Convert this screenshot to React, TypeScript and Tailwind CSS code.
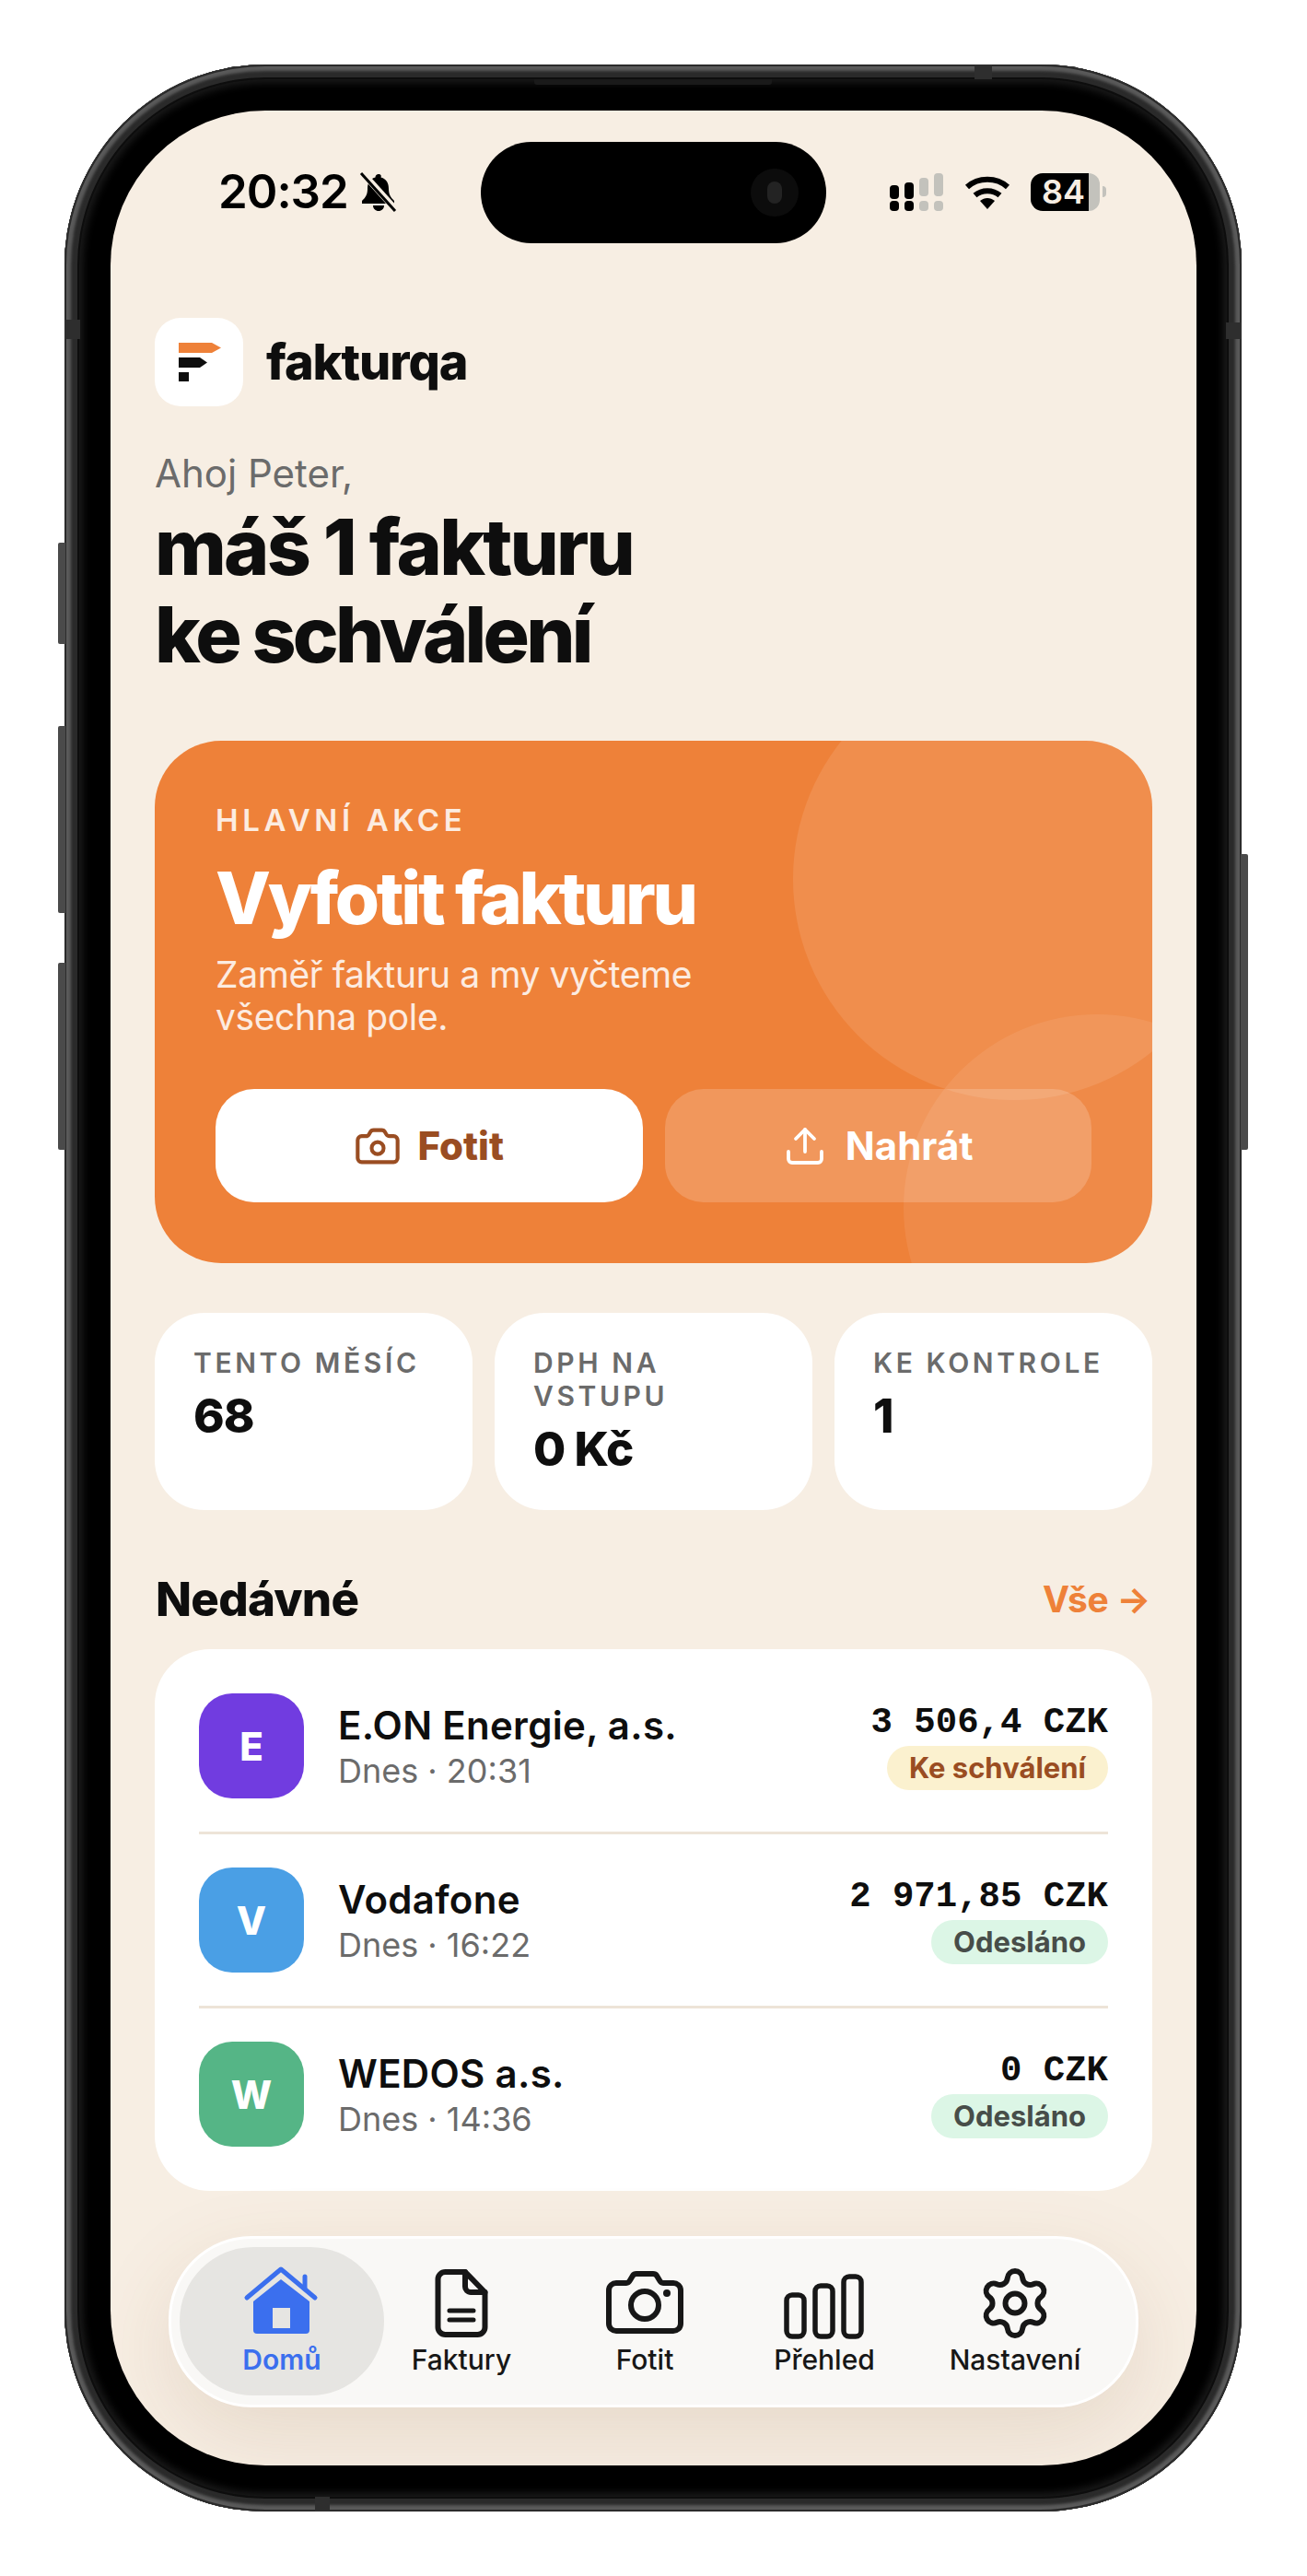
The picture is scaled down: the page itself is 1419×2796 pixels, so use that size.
import { Camera, Settings, Upload } from "lucide-react";

const BellOffIcon = () => (
  <svg width="42" height="44" viewBox="0 0 42 44" className="ml-[12px]">
    <path d="M21 3c-2 0-3.500 1.500-3.500 3.500C11 8.500 9 13 9 19c0 6-2 9-6 13v3h35v-3c-4-4-6-7-6-13 0-6-2-10.500-8.500-12.500C24.500 4.500 23 3 21 3z" fill="#000" />
    <path d="M15 37h12c0 3.500-2.700 6-6 6s-6-2.500-6-6z" fill="#000" />
    <path d="M3 1l37 41" stroke="#F7EEE3" strokeWidth="7" />
    <path d="M2 2l37 41" stroke="#000" strokeWidth="3" />
  </svg>
);

const SignalIcon = () => (
  <svg width="58" height="41" viewBox="0 0 58 41">
    <rect x="0" y="13" width="10" height="15" rx="4" fill="#000" />
    <rect x="16" y="10" width="10" height="18" rx="4" fill="#000" />
    <rect x="32" y="5" width="10" height="20" rx="4" fill="#C3C2BC" />
    <rect x="48" y="0" width="10" height="25" rx="4" fill="#C3C2BC" />
    <rect x="0" y="30" width="10" height="11" rx="4" fill="#000" />
    <rect x="16" y="30" width="10" height="11" rx="4" fill="#000" />
    <rect x="32" y="30" width="10" height="11" rx="4" fill="#C3C2BC" />
    <rect x="48" y="30" width="10" height="11" rx="4" fill="#C3C2BC" />
  </svg>
);

const WifiIcon = () => (
  <svg width="50" height="37" viewBox="0 0 50 37" fill="none">
    <path d="M3 13C15 2 35 2 47 13" stroke="#000" strokeWidth="6" />
    <path d="M11.500 22C19 15.500 31 15.500 38.500 22" stroke="#000" strokeWidth="6" />
    <path d="M17 28c5-4 11-4 16 0l-8 9z" fill="#000" />
  </svg>
);

const HouseIcon = () => (
  <svg width="84" height="84" viewBox="0 0 84 84" fill="none">
    <path d="M4 36L41 5l37 31" stroke="#3B6FEE" strokeWidth="5" strokeLinecap="round" strokeLinejoin="round" />
    <path d="M67 13v13" stroke="#3B6FEE" strokeWidth="5" strokeLinecap="round" />
    <path d="M41 16L72 40v31a4 4 0 0 1-4 4H15a4 4 0 0 1-4-4V40z" fill="#3B6FEE" />
    <rect x="32" y="47" width="19" height="22" fill="#E6E5E2" />
  </svg>
);

const DocIcon = () => (
  <svg width="84" height="84" viewBox="0 0 84 84" fill="none" stroke="#171717" strokeWidth="6" strokeLinejoin="round" strokeLinecap="round">
    <path d="M24.500 8H46L67.500 30v38a8 8 0 0 1-8 8h-35a8 8 0 0 1-8-8V16a8 8 0 0 1 8-8z" />
    <path d="M46 8v16a6 6 0 0 0 6 6h15.500" />
    <path d="M29 50h26M29 60h26" strokeWidth="5" />
  </svg>
);

const CameraIcon = () => (
  <svg width="84" height="84" viewBox="0 0 84 84" fill="none" stroke="#171717" strokeWidth="6" strokeLinejoin="round">
    <path d="M11 20h11c2 0 3-1 4-3l3-5c1-1.500 2-2 4-2h18c2 0 3 .5 4 2l3 5c1 2 2 3 4 3h11c4 0 8 3 8 8v36c0 5-4 8-8 8H11c-4 0-8-3-8-8V28c0-5 4-8 8-8z" />
    <circle cx="42" cy="44" r="15" />
    <circle cx="66" cy="31" r="4" fill="#171717" stroke="none" />
  </svg>
);

const ChartIcon = () => (
  <svg width="90" height="84" viewBox="0 0 90 84" fill="none" stroke="#171717" strokeWidth="5.500">
    <rect x="4" y="33" width="19" height="45" rx="6" />
    <rect x="35" y="23" width="19" height="55" rx="6" />
    <rect x="66" y="13" width="19" height="65" rx="6" />
  </svg>
);

const FrameBand = ({ className }: { className: string }) => <div className={`absolute bg-[#2e2e2e] ${className}`} />;

const invoices = [
  { letter: "E", color: "bg-[#713CE0]", name: "E.ON Energie, a.s.", time: "Dnes · 20:31", amount: "3 506,4 CZK", status: "Ke schválení", badge: "bg-[#FBF1CF] text-[#9A4D22]" },
  { letter: "V", color: "bg-[#4A9FE5]", name: "Vodafone", time: "Dnes · 16:22", amount: "2 971,85 CZK", status: "Odesláno", badge: "bg-[#DCF6E6] text-[#474D49]" },
  { letter: "W", color: "bg-[#55B586]", name: "WEDOS a.s.", time: "Dnes · 14:36", amount: "0 CZK", status: "Odesláno", badge: "bg-[#DCF6E6] text-[#474D49]" },
];

const stats = [
  { label: "TENTO MĚSÍC", value: "68" },
  { label: "DPH NA VSTUPU", value: "0 Kč" },
  { label: "KE KONTROLE", value: "1" },
];

const App = () => {
  return (
    <div className="w-[1419px] h-[2796px] bg-white pl-[70px] pt-[70px] [font-family:Inter,sans-serif] text-[#0E0E0E]">
      <div className="relative w-[1278px] h-[2656px] rounded-[218px] bg-black py-[50px] pl-[50px] pr-[49px] shadow-[inset_0_0_0_2px_#2b2b2b,inset_0_0_3px_7px_#5a5a5a,inset_0_0_0_14px_#2a2a2a,inset_0_0_0_16px_#0d0d0d,inset_0_0_8px_20px_#1b1b1b]">
        {/* side buttons */}
        <div className="absolute left-[-7px] top-[519px] w-[8px] h-[110px] rounded-l-[2px] bg-[#4a4a4a]" />
        <div className="absolute left-[-7px] top-[718px] w-[8px] h-[203px] rounded-l-[2px] bg-[#4a4a4a]" />
        <div className="absolute left-[-7px] top-[975px] w-[8px] h-[203px] rounded-l-[2px] bg-[#4a4a4a]" />
        <div className="absolute right-[-7px] top-[857px] w-[8px] h-[321px] rounded-r-[2px] bg-[#4a4a4a]" />
        <FrameBand className="left-0 top-[277px] w-[17px] h-[21px]" />
        <FrameBand className="right-0 top-[280px] w-[17px] h-[18px]" />
        <FrameBand className="left-[988px] top-0 w-[19px] h-[16px]" />
        <FrameBand className="left-[272px] bottom-0 w-[16px] h-[16px]" />
        <div className="absolute left-[510px] top-[16px] w-[258px] h-[6px] rounded-b-[3px] bg-[#1a1a1a]" />

        {/* screen */}
        <div className="relative w-[1179px] h-[2556px] rounded-[168px] overflow-hidden bg-[#F7EEE3]">
          {/* dynamic island */}
          <div className="absolute left-[402px] top-[34px] w-[375px] h-[110px] rounded-[55px] bg-black">
            <div className="absolute left-[293px] top-[29px] w-[52px] h-[52px] rounded-full bg-[#0c0c0c] flex items-center justify-center">
              <div className="w-[16px] h-[24px] rounded-full bg-[#232323]" />
            </div>
          </div>

          {/* status bar */}
          <div className="flex items-center h-[44px] mt-[66px] pl-[117px] pr-[98px]">
            <span className="text-[51px] leading-[44px] font-semibold tracking-[-0.02em] text-black">20:32</span>
            <BellOffIcon />
            <div className="ml-auto flex items-center">
              <SignalIcon />
              <div className="ml-[23px]">
                <WifiIcon />
              </div>
              <div className="ml-[22px] flex items-center">
                <div className="w-[63px] h-[41px] rounded-l-[13px] bg-black text-[#F7EEE3] text-[36px] leading-[41px] font-semibold text-right pr-[4px]">84</div>
                <div className="w-[12px] h-[41px] rounded-r-[13px] bg-[#C3C2BC]" />
                <div className="ml-[3px] w-[4px] h-[12px] rounded-r-[4px] bg-[#C3C2BC]" />
              </div>
            </div>
          </div>

          <div className="px-[48px]">
            {/* brand */}
            <div className="flex items-center mt-[115px]">
              <div className="w-[96px] h-[96px] rounded-[28px] bg-white">
                <svg width="96" height="96" viewBox="0 0 96 96">
                  <path d="M26 27h36l10 5.500-10 5.500H26z" fill="#EE8139" />
                  <path d="M26 43h23l8 5.500-8 5.500H26z" fill="#0E0E0E" />
                  <rect x="26" y="59" width="11" height="10" fill="#0E0E0E" />
                </svg>
              </div>
              <span className="ml-[25px] text-[54px] leading-[62px] font-extrabold tracking-[-0.02em]">fakturqa</span>
            </div>

            {/* greeting */}
            <p className="mt-[47px] text-[42px] leading-[51px] text-[#6B6B6B]">Ahoj Peter,</p>
            <h1 className="mt-[7px] text-[84px] leading-[95px] font-extrabold tracking-[-0.033em]">
              máš 1 fakturu
              <br />
              <span className="tracking-[-0.045em]">ke schválení</span>
            </h1>

            {/* main action */}
            <div className="relative mt-[68px] h-[567px] rounded-[72px] overflow-hidden bg-[#EE8139] px-[66px] pt-[66px] text-white">
              <div className="absolute right-[-90px] top-[-90px] w-[480px] h-[480px] rounded-full bg-white/10" />
              <div className="absolute right-[-150px] bottom-[-150px] w-[420px] h-[420px] rounded-full bg-white/[0.08]" />
              <div className="relative">
                <p className="text-[33px] leading-[40px] font-semibold tracking-[0.14em] text-white/85">HLAVNÍ AKCE</p>
                <h2 className="mt-[17px] text-[78px] leading-[95px] font-extrabold tracking-[-0.043em]">Vyfotit fakturu</h2>
                <p className="mt-[13px] w-[620px] text-[39px] leading-[46px] tracking-[-0.01em] text-white/85">
                  Zaměř fakturu a my vyčteme
                  <br />
                  všechna pole.
                </p>
                <div className="flex gap-[24px] mt-[55px]">
                  <div className="flex-1 h-[123px] rounded-[42px] bg-white flex items-center justify-center gap-[17px] text-[#9A4D22]">
                    <Camera size={52} strokeWidth={1.9} />
                    <span className="text-[42px] font-extrabold">Fotit</span>
                  </div>
                  <div className="flex-1 h-[123px] rounded-[42px] bg-white/[0.18] flex items-center justify-center gap-[20px]">
                    <Upload size={48} strokeWidth={1.9} />
                    <span className="text-[42px] font-bold">Nahrát</span>
                  </div>
                </div>
              </div>
            </div>

            {/* stats */}
            <div className="grid grid-cols-3 gap-[24px] mt-[54px]">
              {stats.map((s) => (
                <div key={s.label} className="h-[214px] rounded-[54px] bg-white px-[42px] pt-[36px]">
                  <p className="text-[30px] leading-[36px] font-semibold tracking-[0.12em] text-[#6B6B6B]">{s.label}</p>
                  <p className="mt-[9px] text-[51px] leading-[62px] font-extrabold tracking-[-0.02em]">{s.value}</p>
                </div>
              ))}
            </div>

            {/* recent */}
            <div className="flex items-center justify-between h-[62px] mt-[66px] pl-[1px] pr-[2px]">
              <h3 className="text-[51px] font-extrabold tracking-[-0.015em]">Nedávné</h3>
              <span className="text-[39px] font-bold tracking-[-0.01em] text-[#EE8139]">Vše →</span>
            </div>

            <div className="mt-[23px] rounded-[60px] bg-white px-[48px] py-[12px]">
              {invoices.map((inv, i) => (
                <div key={inv.name} className={i < 2 ? "flex items-center h-[189px] border-b-[3px] border-[#EDE4D8]" : "flex items-center h-[186px]"}>
                  <div className={`w-[114px] h-[114px] rounded-[36px] flex items-center justify-center text-white text-[42px] font-extrabold ${inv.color}`}>
                    {inv.letter}
                  </div>
                  <div className="ml-[37px]">
                    <p className="text-[42px] leading-[51px] font-semibold tracking-[0.3px]">{inv.name}</p>
                    <p className="mt-[2px] text-[36px] leading-[44px] text-[#6B6B6B]">{inv.time}</p>
                  </div>
                  <div className="ml-auto flex flex-col items-end">
                    <p className="text-[39px] leading-[44px] font-bold [font-family:'Liberation_Mono',monospace] whitespace-pre">{inv.amount}</p>
                    <span className={`mt-[3px] h-[48px] rounded-full px-[24px] text-[31px] leading-[48px] font-bold ${inv.badge}`}>{inv.status}</span>
                  </div>
                </div>
              ))}
            </div>
          </div>

          {/* tab bar */}
          <div className="mx-[63px] mt-[49px] h-[186px] w-[1053px] rounded-[90px] border-[3px] border-white bg-[#F9F8F6] pl-[9px] pt-[9px] flex shadow-[0_30px_90px_rgba(120,80,40,0.13)] text-[#171717]">
            <div className="w-[222px] h-[161px] rounded-[80px] bg-[#E6E5E2] flex flex-col items-center pt-[19px] text-[#3B6FEE]">
              <HouseIcon />
              <span className="mt-[1px] text-[30px] leading-[36px] font-semibold">Domů</span>
            </div>
            <div className="w-[168px] flex flex-col items-center pt-[19px]">
              <DocIcon />
              <span className="mt-[1px] text-[30px] leading-[36px] font-medium">Faktury</span>
            </div>
            <div className="w-[230px] flex flex-col items-center pt-[19px]">
              <CameraIcon />
              <span className="mt-[1px] text-[30px] leading-[36px] font-medium">Fotit</span>
            </div>
            <div className="w-[160px] flex flex-col items-center pt-[19px]">
              <ChartIcon />
              <span className="mt-[1px] text-[30px] leading-[36px] font-medium">Přehled</span>
            </div>
            <div className="w-[254px] flex flex-col items-center pt-[19px]">
              <Settings size={84} strokeWidth={1.7} />
              <span className="mt-[1px] text-[30px] leading-[36px] font-medium">Nastavení</span>
            </div>
          </div>
        </div>
      </div>
    </div>
  );
};

export default App;
